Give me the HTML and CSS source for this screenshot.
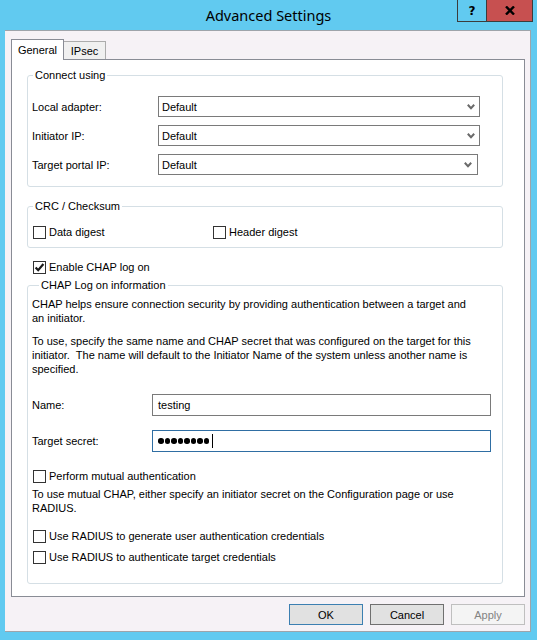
FILE: index.html
```html
<!DOCTYPE html>
<html>
<head>
<meta charset="utf-8">
<title>Advanced Settings</title>
<link rel="stylesheet" href="styles.css">
</head>
<body>
<div class="window">
  <div class="titlebar">
    <div class="title">Advanced Settings</div>
    <div class="caption">
      <div class="cap-btn help">?</div>
      <div class="cap-btn close">
        <svg width="10" height="9" viewBox="0 0 10 9"><path d="M1 0.5 L9 8.5 M9 0.5 L1 8.5" stroke="#000" stroke-width="2.4" fill="none"/></svg>
      </div>
    </div>
  </div>
  <div class="client">
    <div class="tabs">
      <div class="tab active">General</div>
      <div class="tab">IPsec</div>
    </div>
    <div class="panel">
      <fieldset class="group connect">
        <legend>Connect using</legend>
        <div class="form-grid">
          <span>Local adapter:</span>
          <div class="select"><span>Default</span><svg class="chev" width="8" height="6" viewBox="0 0 8 6"><path d="M0.8 0.8 L4 4.2 L7.2 0.8" stroke="#6a6a6a" stroke-width="2" fill="none"/></svg></div>
          <span>Initiator IP:</span>
          <div class="select"><span>Default</span><svg class="chev" width="8" height="6" viewBox="0 0 8 6"><path d="M0.8 0.8 L4 4.2 L7.2 0.8" stroke="#6a6a6a" stroke-width="2" fill="none"/></svg></div>
          <span>Target portal IP:</span>
          <div class="select narrow"><span>Default</span><svg class="chev" width="8" height="6" viewBox="0 0 8 6"><path d="M0.8 0.8 L4 4.2 L7.2 0.8" stroke="#6a6a6a" stroke-width="2" fill="none"/></svg></div>
        </div>
      </fieldset>

      <fieldset class="group crc">
        <legend>CRC / Checksum</legend>
        <div class="crc-row">
          <div class="check"><span class="box"></span>Data digest</div>
          <div class="check"><span class="box"></span>Header digest</div>
        </div>
      </fieldset>

      <div class="check enable"><span class="box"><svg width="11" height="11" viewBox="0 0 11 11"><path d="M1.6 5.4 L4.2 8.2 L9.4 2" stroke="#1a1a1a" stroke-width="2.2" fill="none"/></svg></span>Enable CHAP log on</div>

      <fieldset class="group chap">
        <legend>CHAP Log on information</legend>
        <p>CHAP helps ensure connection security by providing authentication between a target and<br>an initiator.</p>
        <p>To use, specify the same name and CHAP secret that was configured on the target for this<br>initiator.&nbsp; The name will default to the Initiator Name of the system unless another name is<br>specified.</p>
        <div class="cred-grid">
          <span>Name:</span>
          <div class="input">testing</div>
          <span>Target secret:</span>
          <div class="input focus"><span class="dots"><i></i><i></i><i></i><i></i><i></i><i></i><i></i><i></i></span><span class="caret"></span></div>
        </div>
        <div class="check perform"><span class="box"></span>Perform mutual authentication</div>
        <p class="note">To use mutual CHAP, either specify an initiator secret on the Configuration page or use<br>RADIUS.</p>
        <div class="check radius1"><span class="box"></span>Use RADIUS to generate user authentication credentials</div>
        <div class="check radius2"><span class="box"></span>Use RADIUS to authenticate target credentials</div>
      </fieldset>
    </div>
    <div class="buttons">
      <div class="btn default">OK</div>
      <div class="btn cancel">Cancel</div>
      <div class="btn disabled">Apply</div>
    </div>
  </div>
</div>
</body>
</html>
```

FILE: styles.css
```css
html, body {
  margin: 0;
  padding: 0;
}
body {
  background: #61caf0;
  font-family: "Liberation Sans", Arial, sans-serif;
  font-size: 11px;
  color: #000;
}
.window {
  width: 537px;
  height: 640px;
  box-sizing: border-box;
  padding-bottom: 8px;
  display: flex;
  flex-direction: column;
  background: #61caf0;
}
.titlebar {
  flex: none;
  height: 30px;
  display: grid;
  grid-template-columns: 1fr auto 1fr;
}
.title {
  grid-column: 2;
  font-family: "Noto Sans", "Open Sans", sans-serif;
  font-size: 14.5px;
  line-height: 30px;
  color: #000;
}
.caption {
  grid-column: 3;
  justify-self: end;
  align-self: start;
  display: flex;
  margin-right: 4px;
}
.cap-btn {
  height: 22px;
  box-sizing: border-box;
  border: 1px solid #3c3c3c;
  border-top: none;
  display: flex;
  align-items: center;
  justify-content: center;
}
.help {
  width: 30px;
  font-family: "DejaVu Sans", sans-serif;
  font-weight: bold;
  font-size: 12px;
}
.close {
  width: 47px;
  margin-left: -1px;
  background: #c75050;
}
.client {
  flex: 1;
  min-height: 0;
  margin: 0 6px 0 5px;
  background: #f6f2f6;
  border: 1px solid #9ea4aa;
  border-left: none;
  padding: 8px 5px 6px 6px;
  display: flex;
  flex-direction: column;
}
.tabs {
  flex: none;
  height: 21px;
  display: flex;
  align-items: flex-end;
  margin-bottom: -1px;
  position: relative;
  z-index: 1;
}
.tab {
  box-sizing: border-box;
  border: 1px solid #acacac;
  border-bottom: none;
  display: flex;
  align-items: center;
  justify-content: center;
}
.tab.active {
  width: 53px;
  height: 21px;
  background: #fff;
  border-color: #898c95;
}
.tab:not(.active) {
  width: 42px;
  height: 18px;
  margin-bottom: 1px;
  border-left: none;
  background: #f0f0f0;
  padding-top: 1px;
}
.panel {
  flex: 1;
  min-height: 0;
  background: #fff;
  border: 1px solid #898c95;
  padding: 8px 21px 0 15px;
  display: flex;
  flex-direction: column;
}
.group {
  margin: 0;
  min-width: 0;
  border: 1px solid #d5dfe5;
  border-radius: 3px;
}
.group legend {
  padding: 0 2px;
  margin-left: 1px;
  line-height: 14px;
}
.connect {
  padding: 14px 22px 11px 4px;
}
.form-grid {
  display: grid;
  grid-template-columns: 126px 1fr;
  row-gap: 8px;
  align-items: center;
}
.select {
  height: 21px;
  box-sizing: border-box;
  border: 1px solid #7a7a7a;
  background: #fff;
  display: flex;
  align-items: center;
  justify-content: space-between;
  padding: 0 4px 0 3px;
}
.select.narrow {
  margin-right: 2px;
  padding-right: 5px;
}
.chev {
  display: block;
}
.crc {
  margin-top: 12px;
  padding: 13px 4px 8px;
}
.crc-row {
  display: grid;
  grid-template-columns: 180px auto;
}
.check {
  display: flex;
  align-items: center;
  height: 13px;
  line-height: 13px;
  white-space: nowrap;
}
.box {
  flex: none;
  width: 13px;
  height: 13px;
  box-sizing: border-box;
  border: 1px solid #333;
  background: #fff;
  margin: 0 3px 0 1px;
  display: flex;
  align-items: center;
  justify-content: center;
}
.box svg {
  display: block;
}
.enable {
  margin: 13px 0 0 5px;
}
.chap {
  margin-top: 4px;
  padding: 5px 11px 19px 4px;
}
.chap legend {
  margin-left: 7px;
}
.chap p {
  margin: 0;
  line-height: 14px;
  white-space: nowrap;
}
.chap p + p {
  margin-top: 9px;
}
.cred-grid {
  margin-top: 18px;
  display: grid;
  grid-template-columns: 120px 1fr;
  row-gap: 14px;
  align-items: center;
}
.input {
  height: 22px;
  box-sizing: border-box;
  border: 1px solid #7a7a7a;
  background: #fff;
  padding-left: 5px;
  display: flex;
  align-items: center;
}
.input.focus {
  border-color: #2f6ea3;
}
.dots {
  display: flex;
  gap: 1px;
}
.dots i {
  width: 5.5px;
  height: 5.5px;
  border-radius: 50%;
  background: #000;
}
.caret {
  width: 1px;
  height: 14px;
  background: #000;
  margin-left: 3px;
}
.perform {
  margin-top: 18px;
}
.chap p.note {
  margin-top: 4px;
}
.radius1 {
  margin-top: 15px;
}
.radius2 {
  margin-top: 8px;
}
.buttons {
  flex: none;
  display: flex;
  justify-content: flex-end;
  gap: 7px;
  margin-top: 7px;
}
.btn {
  width: 74px;
  height: 21px;
  box-sizing: border-box;
  border: 1px solid #adadad;
  background: #e1e1e1;
  display: flex;
  align-items: center;
  justify-content: center;
}
.btn.default {
  border-color: #3c7fb1;
}
.btn.cancel {
  border-color: #707070;
}
.btn.disabled {
  background: #f4f4f4;
  border-color: #bfbfbf;
  color: #838383;
}
```
